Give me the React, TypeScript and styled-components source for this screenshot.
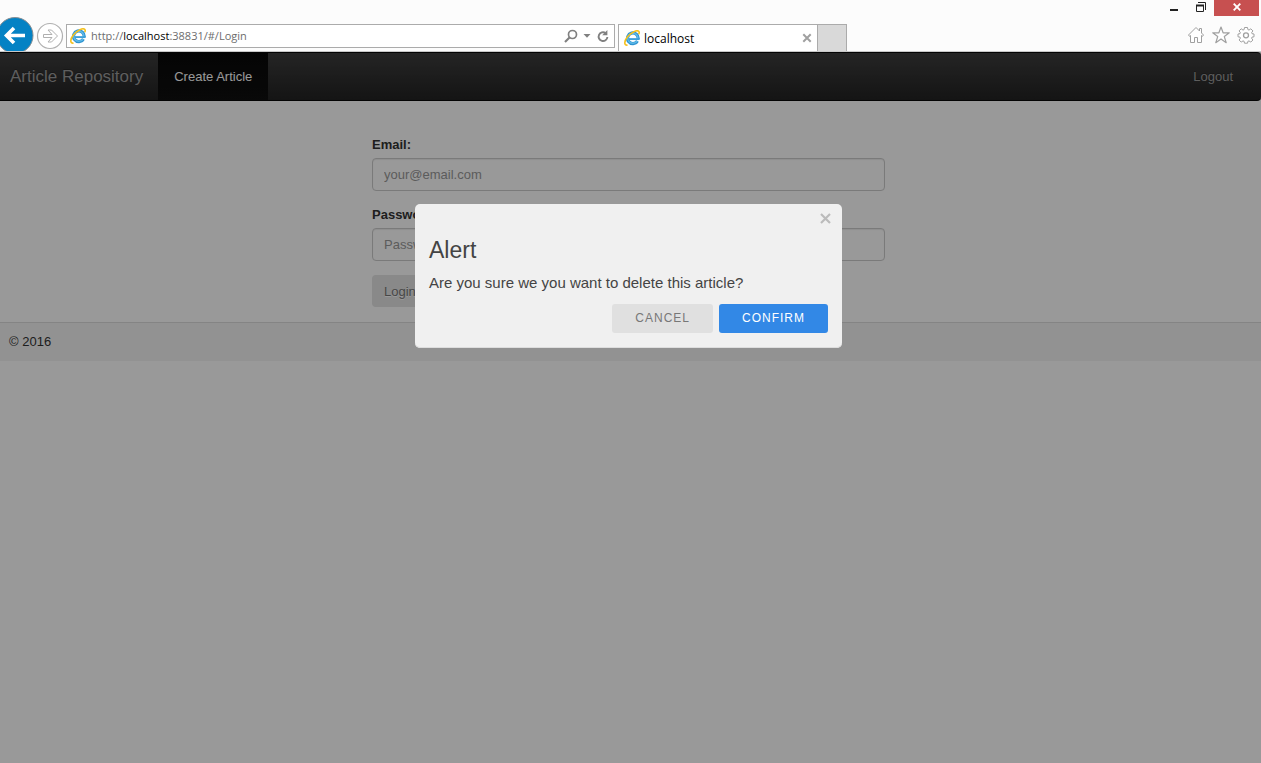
import React from "react";
import styled, { createGlobalStyle } from "styled-components";

const GlobalStyle = createGlobalStyle`
  *, *::before, *::after { box-sizing: border-box; }
  html, body { margin: 0; height: 100%; }
  #root { height: 100%; }
  body, button, input { font-family: "Liberation Sans", Arial, sans-serif; }
  body { font-size: 13px; line-height: 18px; color: #333; background: #fff; }
`;

const Window = styled.div`
  min-height: 100%;
  display: flex;
  flex-direction: column;
`;

/* Browser chrome */
const Chrome = styled.header`
  flex: none;
  height: 52px;
  display: flex;
  align-items: flex-start;
  background: #fcfcfc;
  border-bottom: 1px solid #c8c8c8;
  overflow: hidden;
  font-family: "Open Sans", "Noto Sans", sans-serif;
  font-size: 12px;
`;

const ChromeButton = styled.button`
  display: flex;
  align-items: center;
  justify-content: center;
  padding: 0;
  border: 0;
  background: none;
`;

const NavButtons = styled.div`
  flex: none;
  display: flex;
  align-items: flex-start;
  width: 66px;
  height: 51px;
  padding-top: 17px;
  overflow: hidden;
  svg { display: block; flex: none; }
`;

const AddressBar = styled.div`
  flex: 0 1 549px;
  min-width: 0;
  height: 24px;
  margin-top: 24px;
  padding: 0 4px 0 3px;
  display: flex;
  align-items: center;
  gap: 5px;
  border: 1px solid #ababab;
  background: #fff;
`;

const Url = styled.span`
  flex: 1;
  min-width: 0;
  overflow: hidden;
  white-space: nowrap;
  font-size: 11px;
  color: #6d6d6d;
  b { font-weight: 400; color: #000; }
`;

const Tab = styled.div`
  flex: 0 1 200px;
  height: 27px;
  margin: 24px 0 0 3px;
  padding: 0 5px;
  display: flex;
  align-items: center;
  gap: 4px;
  border: 1px solid #ababab;
  border-bottom: 0;
  background: #fff;
  color: #000;
`;

const TabTitle = styled.span`
  flex: 1;
  padding-top: 2px;
`;

const NewTab = styled.button`
  flex: none;
  width: 29px;
  height: 27px;
  margin-top: 24px;
  padding: 0;
  border: solid #ababab;
  border-width: 1px 1px 0 0;
  background: #d9d9d9;
`;

const WindowTools = styled.div`
  margin-left: auto;
  display: flex;
  flex-direction: column;
  align-items: flex-end;
`;

const Captions = styled.div`
  display: flex;
  height: 16px;
  padding-right: 2px;
`;

const Caption = styled(ChromeButton)<{ $close?: boolean }>`
  width: ${(p) => (p.$close ? 45 : 27)}px;
  height: 16px;
  padding-bottom: 2px;
  background: ${(p) => (p.$close ? "#c75050" : "transparent")};
`;

const Shortcuts = styled.div`
  display: flex;
  gap: 7px;
  padding: 10px 6px 0 0;
`;

/* Page */
const Page = styled.div`
  position: relative;
  flex: 1;
`;

const NavBar = styled.nav`
  height: 49px;
  display: flex;
  align-items: stretch;
  padding-right: 12px;
  border: solid #080808;
  border-width: 1px 0;
  border-radius: 0 4px 4px 0;
  background: linear-gradient(#3e3e3e, #222);
`;

const NavLink = styled.a<{ $kind?: "brand" | "active" }>`
  display: flex;
  align-items: center;
  padding: ${(p) => (p.$kind === "brand" ? "0 15px 0 10px" : "0 16px")};
  font-size: ${(p) => (p.$kind === "brand" ? 17 : 13)}px;
  color: ${(p) => (p.$kind === "active" ? "#fff" : "#9d9d9d")};
  background: ${(p) => (p.$kind === "active" ? "linear-gradient(#080808, #0f0f0f)" : "none")};
  text-decoration: none;
  text-shadow: 0 -1px 0 rgba(0, 0, 0, 0.25);
`;

const Spacer = styled.span`
  flex: 1;
`;

const LoginForm = styled.form`
  width: 41%;
  margin: 0 auto;
  padding: 35px 4px 15px 0;
`;

const Field = styled.div`
  padding-bottom: 15px;
  &:nth-of-type(2) { padding-bottom: 14px; }
`;

const Label = styled.label`
  display: block;
  margin-bottom: 4px;
  font-weight: 700;
`;

const TextInput = styled.input`
  display: block;
  width: 100%;
  height: 33px;
  padding: 0 11px;
  border: 1px solid #ccc;
  border-radius: 4px;
  background: #fff;
  box-shadow: inset 0 1px 1px rgba(0, 0, 0, 0.075);
  font-size: 13px;
  &::placeholder { color: #999; opacity: 1; }
`;

const LoginButton = styled.button`
  display: block;
  height: 32px;
  padding: 0 12px;
  border: 0;
  border-radius: 4px;
  background: #e4e4e4;
  color: #777;
  font-size: 13px;
  text-shadow: 0 1px 0 #fff;
`;

const Footer = styled.footer`
  padding: 10px 9px;
  border-top: 1px solid #ddd;
  background: #f3f3f3;
`;

/* Dialog */
const Overlay = styled.div`
  position: absolute;
  inset: 0;
  padding: 152px 4px 0 0;
  background: rgba(0, 0, 0, 0.4);
`;

const Dialog = styled.div`
  position: relative;
  width: 427px;
  max-width: 100%;
  margin: 0 auto;
  padding: 30px 14px 15px;
  border-radius: 5px;
  background: #f0f0f0;
  color: #444;
  box-shadow: inset 0 -1px 0 #ddd;
`;

const DialogTitle = styled.h2`
  margin: 0 0 7px;
  font-size: 23px;
  line-height: 32px;
  font-weight: 400;
`;

const DialogText = styled.p`
  margin: 0 0 11px;
  font-size: 15px;
  line-height: 20px;
`;

const Actions = styled.div`
  display: flex;
  justify-content: flex-end;
  gap: 6px;
`;

const ActionButton = styled.button<{ $primary?: boolean }>`
  height: 29px;
  padding: 0 23px 2px;
  border: 0;
  border-radius: 3px;
  background: ${(p) => (p.$primary ? "#3288e6" : "#e0e0e0")};
  color: ${(p) => (p.$primary ? "#fff" : "#777")};
  font-size: 12px;
  letter-spacing: 1px;
  text-transform: uppercase;
`;

const CloseButton = styled.button`
  position: absolute;
  top: 4px;
  right: 7px;
  width: 20px;
  height: 20px;
  padding: 0;
  border: 0;
  background: none;
  display: flex;
  align-items: center;
  justify-content: center;
`;

const IeLogo = () => (
  <svg width="16" height="16" viewBox="0 0 16 16" fill="none" aria-hidden="true">
    <path d="M13.400 11A5.300 5.300 0 1 1 14.100 9" stroke="#2e93d0" strokeWidth="3.200" />
    <path d="M13.200 10.900A5.100 5.100 0 1 1 13.900 9" stroke="#5db9e8" strokeWidth="1.600" />
    <path d="M5 9.100h10.600" stroke="#3d9fd8" strokeWidth="1.900" />
    <path d="M3.500 15.100C-.2 15.600 0 11.200 3.500 6.800 7.600 1.900 13 -.2 14.700 1.300c.8.700.6 1.700.1 2.900" stroke="#f4c01c" strokeWidth="1.600" />
  </svg>
);

export default function App() {
  return (
    <Window>
      <GlobalStyle />
      <Chrome>
        <NavButtons>
          <ChromeButton aria-label="Back">
            <svg width="34" height="37" viewBox="0 0 34 37">
              <circle cx="15" cy="18.500" r="18" fill="#0482c4" stroke="#8a8f93" />
              <path d="M25 18.500H7M14 11l-7.500 7.500L14 26" fill="none" stroke="#fff" strokeWidth="3.600" />
            </svg>
          </ChromeButton>
          <ChromeButton aria-label="Forward">
            <svg width="32" height="37" viewBox="0 0 32 37" fill="none" stroke="#b0b0b0">
              <circle cx="16" cy="19" r="12.500" strokeWidth="1.200" fill="#fff" />
              <path d="M9.500 17.500h8.500L14 13h3.500l6 6-6 6H14l4-4.500H9.500z" />
            </svg>
          </ChromeButton>
        </NavButtons>
        <AddressBar>
          <IeLogo />
          <Url>http://<b>localhost</b>:38831/#/Login</Url>
          <ChromeButton aria-label="Search">
            <svg width="14" height="14" viewBox="0 0 14 14" fill="none" stroke="#808080">
              <circle cx="8.500" cy="5.500" r="4" strokeWidth="1.700" />
              <path d="M5.500 8.500L1 13" strokeWidth="2.200" />
            </svg>
          </ChromeButton>
          <ChromeButton aria-label="Show address history">
            <svg width="8" height="4" viewBox="0 0 8 4"><path d="M.5 0h7L4 3.800z" fill="#808080" /></svg>
          </ChromeButton>
          <ChromeButton aria-label="Refresh">
            <svg width="14" height="14" viewBox="0 0 14 14" fill="none">
              <path d="M9.500 4A4.400 4.400 0 1 0 11.400 8" stroke="#808080" strokeWidth="1.900" />
              <path d="M11.400 1v5.300H6.200z" fill="#808080" />
            </svg>
          </ChromeButton>
        </AddressBar>
        <Tab>
          <IeLogo />
          <TabTitle>localhost</TabTitle>
          <ChromeButton aria-label="Close tab">
            <svg width="10" height="10" viewBox="0 0 10 10"><path d="M1.300 1.300l7.400 7.400M8.700 1.300L1.300 8.700" stroke="#a0a0a0" strokeWidth="2" /></svg>
          </ChromeButton>
        </Tab>
        <NewTab aria-label="New tab" />
        <WindowTools>
          <Captions>
            <Caption aria-label="Minimize">
              <svg width="8" height="12" viewBox="0 0 8 12"><path d="M0 8h8v2H0z" fill="#222" /></svg>
            </Caption>
            <Caption aria-label="Restore">
              <svg width="10" height="12" viewBox="0 0 10 12" fill="none" stroke="#222">
                <path d="M2 1.500h7.500V9" />
                <path d="M.5 4.500h7v6h-7z" />
                <path d="M0 4.500h8" strokeWidth="2" />
              </svg>
            </Caption>
            <Caption $close aria-label="Close">
              <svg width="8" height="12" viewBox="0 0 8 12"><path d="M.7 2.700l6.600 6.600M7.300 2.700L.7 9.300" stroke="#fff" strokeWidth="1.900" /></svg>
            </Caption>
          </Captions>
          <Shortcuts>
            <ChromeButton aria-label="Home">
              <svg width="18" height="18" viewBox="0 0 18 18" fill="#fff" stroke="#a0a0a0">
                <path d="M9 1.500L1.500 9l1 1.300 1-.8v7h4v-5h3v5h4v-7l1 .8 1-1.300-2-2V2.500h-2V5z" strokeLinejoin="round" />
              </svg>
            </ChromeButton>
            <ChromeButton aria-label="Favorites">
              <svg width="18" height="18" viewBox="0 0 18 18" fill="#fff" stroke="#a0a0a0">
                <path d="M9 1l2.100 5.800h6.200l-5 3.800 1.900 6.100L9 13l-5.200 3.700 1.900-6.100-5-3.800h6.200z" strokeWidth="1.200" strokeLinejoin="round" />
              </svg>
            </ChromeButton>
            <ChromeButton aria-label="Tools">
              <svg width="18" height="18" viewBox="0 0 18 18" fill="#fff" stroke="#a0a0a0">
                <path d="M7.500 1.500h3l.4 2.100 1.100.5 1.800-1.300 2.100 2.100L14.600 6.700l.4 1 2 .3v2.800l-2 .3-.4 1.100 1.300 1.800-2.100 2.100-1.800-1.200-1.100.4-.4 1.900h-3l-.4-1.900-1.100-.4-1.800 1.200-2.100-2.100 1.300-1.800-.4-1.100-2-.3V8l2-.3.4-1-1.300-1.800 2.100-2.100L6 4.100l1.100-.5z" strokeLinejoin="round" />
                <circle cx="9" cy="9.300" r="2.500" strokeWidth="1.300" />
              </svg>
            </ChromeButton>
          </Shortcuts>
        </WindowTools>
      </Chrome>
      <Page>
        <NavBar>
          <NavLink href="#/" $kind="brand">Article Repository</NavLink>
          <NavLink href="#/Create" $kind="active">Create Article</NavLink>
          <Spacer />
          <NavLink href="#/Logout">Logout</NavLink>
        </NavBar>
        <LoginForm>
          <Field>
            <Label htmlFor="email">Email:</Label>
            <TextInput id="email" type="email" placeholder="your@email.com" />
          </Field>
          <Field>
            <Label htmlFor="password">Password:</Label>
            <TextInput id="password" type="password" placeholder="Password" />
          </Field>
          <LoginButton type="button">Login</LoginButton>
        </LoginForm>
        <Footer>© 2016</Footer>
        <Overlay>
          <Dialog role="dialog" aria-modal="true" aria-labelledby="alert-title">
            <CloseButton aria-label="Close dialog">
              <svg width="11" height="11" viewBox="0 0 11 11"><path d="M1 1l9 9M10 1L1 10" stroke="#bbb" strokeWidth="2.200" /></svg>
            </CloseButton>
            <DialogTitle id="alert-title">Alert</DialogTitle>
            <DialogText>Are you sure we you want to delete this article?</DialogText>
            <Actions>
              <ActionButton type="button">Cancel</ActionButton>
              <ActionButton type="button" $primary>Confirm</ActionButton>
            </Actions>
          </Dialog>
        </Overlay>
      </Page>
    </Window>
  );
}
